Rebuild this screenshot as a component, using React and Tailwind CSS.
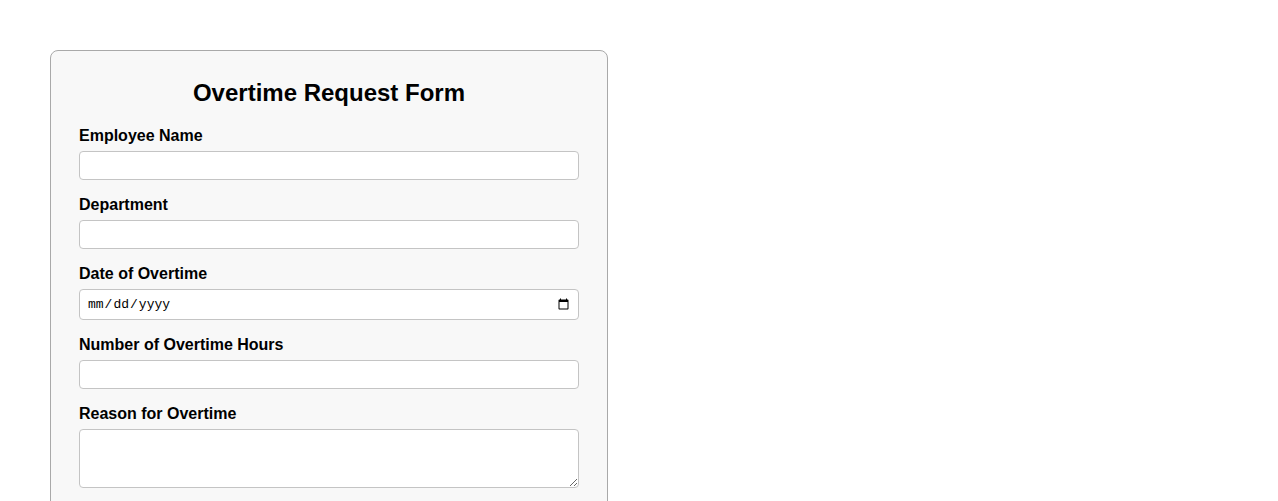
import React from 'react';

// Single form field: bold label above a bordered input
function Field({ label, type = 'text', textarea = false }) {
  return (
    <div className="mb-[16px]">
      <label className="block text-[16px] leading-[18px] font-bold text-black mb-[6px]">{label}</label>
      {textarea ? (
        <textarea className="block w-full h-[59px] bg-white border border-[#c4c4c4] rounded-[4px] px-2 py-1 text-[13px] resize-y" />
      ) : type === 'date' ? (
        <input
          type="date"
          className="block w-full h-[31px] bg-white border border-[#c4c4c4] rounded-[4px] pl-[7px] pr-[6px] text-[13px]! leading-[15px] text-black font-['Liberation_Mono',monospace]"
        />
      ) : (
        <input type={type} className="block w-full h-[29px] bg-white border border-[#c4c4c4] rounded-[4px] px-2 text-[13px]" />
      )}
    </div>
  );
}

export default function App() {
  return (
    <div className="min-h-screen bg-white font-['Liberation_Sans',Arial,sans-serif] pt-[50px] pl-[50px]">
      <div className="w-[558px] bg-[#f8f8f8] border border-[#a9a9a9] rounded-[8px] px-[28px] pt-[28px] pb-4">
        <h2 className="text-center text-[24px] leading-[28px] font-bold text-black mb-[20px]">Overtime Request Form</h2>
        <Field label="Employee Name" />
        <Field label="Department" />
        <Field label="Date of Overtime" type="date" />
        <Field label="Number of Overtime Hours" type="number" />
        <Field label="Reason for Overtime" textarea />
      </div>
    </div>
  );
}
